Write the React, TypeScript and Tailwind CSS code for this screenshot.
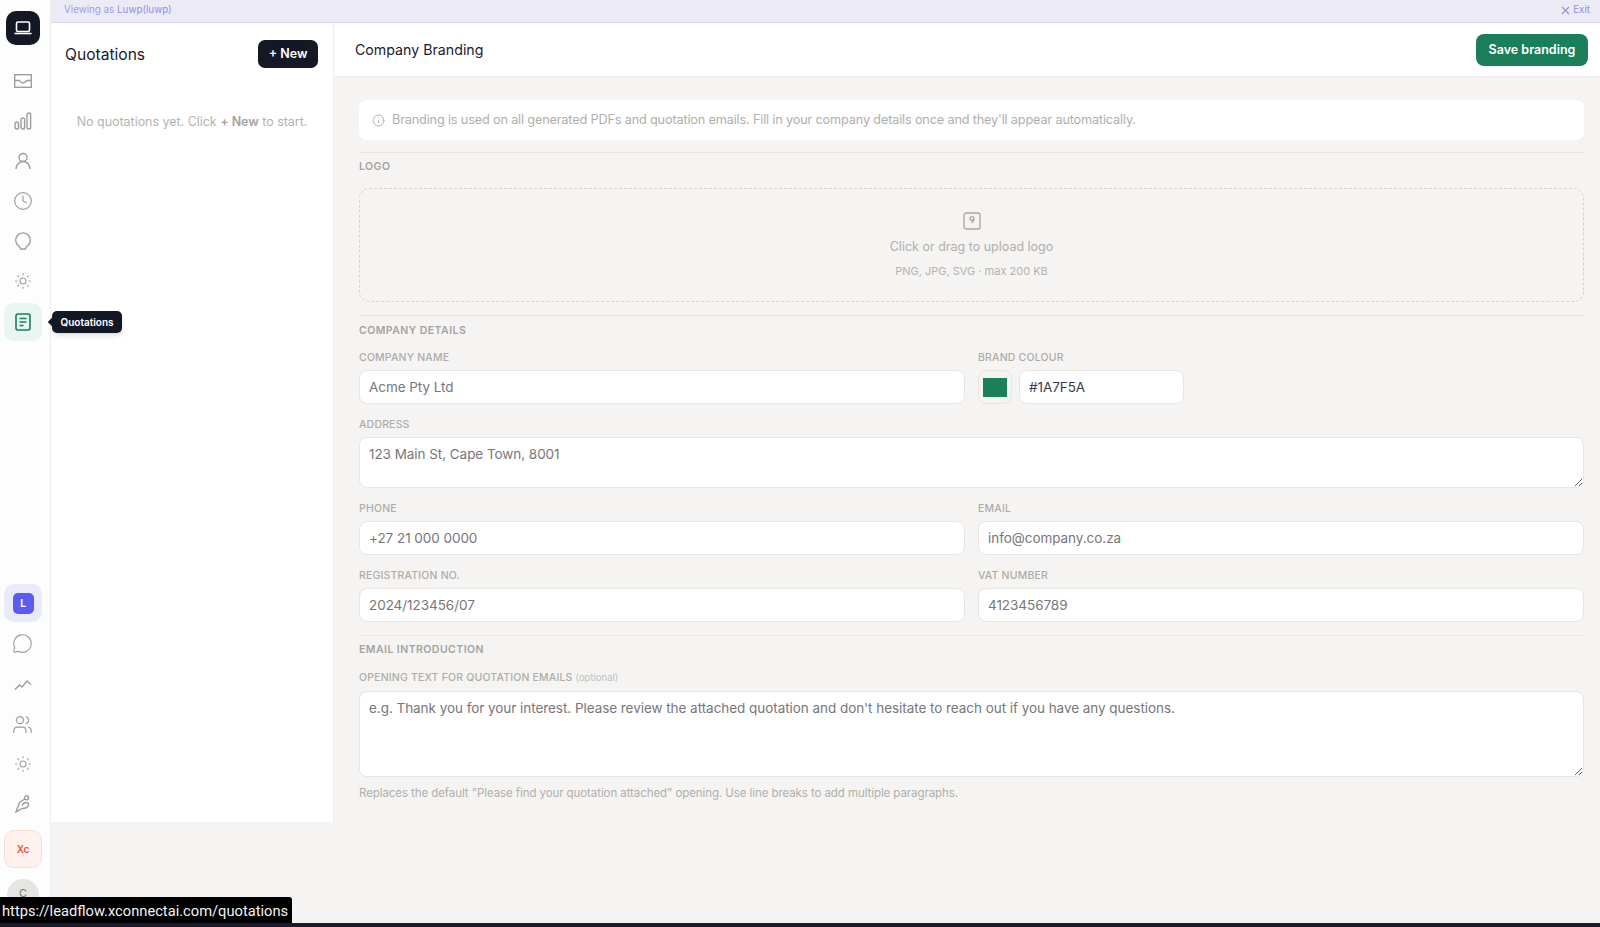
import React from "react";
import { Clock, Info, MessageCircle, Sun, Users, X } from "lucide-react";

const Font = "[font-family:Inter,'Liberation_Sans',sans-serif]";

const railIcon = "flex h-[40px] w-[45px] items-center justify-center text-[#9d9d9d]";

function Inbox() {
  return (
    <svg width="18" height="14" viewBox="0 0 18 14" fill="none" stroke="currentColor" strokeWidth="1.4">
      <rect x="0.7" y="0.7" width="16.6" height="12.6" />
      <path d="M1 6.5h4c1 0 1.5 2.5 4 2.5s3-2.5 4-2.5h4" />
    </svg>
  );
}

function Bars() {
  return (
    <svg width="18" height="18" viewBox="0 0 18 18" fill="none" stroke="currentColor" strokeWidth="1.4">
      <rect x="1" y="10" width="3.6" height="7" rx="1.8" />
      <rect x="7" y="6" width="3.6" height="11" rx="1.8" />
      <rect x="13" y="1" width="3.6" height="16" rx="1.8" />
    </svg>
  );
}

function Person() {
  return (
    <svg width="18" height="18" viewBox="0 0 18 18" fill="none" stroke="currentColor" strokeWidth="1.4">
      <circle cx="9" cy="5.5" r="4" />
      <path d="M2 17c0-4 3-7.5 7-7.5s7 3.5 7 7.5" />
    </svg>
  );
}

function Bulb() {
  return (
    <svg width="18" height="18" viewBox="0 0 18 18" fill="none" stroke="currentColor" strokeWidth="1.4">
      <path d="M5.5 14.6A7.3 7.3 0 1 1 12.5 14.6" />
      <path d="M5.5 14.6c.5.9.8 1.9 1 2.4h5c.2-.5.5-1.5 1-2.4" />
    </svg>
  );
}

function Trend() {
  return (
    <svg width="18" height="12" viewBox="0 0 18 12" fill="none" stroke="currentColor" strokeWidth="1.4">
      <path d="M1 10.5 5.5 6l2.5 2 5-6 4 3.5" />
    </svg>
  );
}

function Pen() {
  return (
    <svg width="16" height="18" viewBox="0 0 16 18" fill="none" stroke="currentColor" strokeWidth="1.4">
      <circle cx="11.5" cy="2.8" r="2" />
      <path d="M9.8 4 4.5 7.5 1 17l6-3.5c3 0 6-1 6.5-3.5.3-1.5-.8-2.5-2.5-2.5-2 0-3.5 2-4 3" />
    </svg>
  );
}

function Doc() {
  return (
    <svg width="16" height="18" viewBox="0 0 16 18" fill="none" stroke="#1a7f5a" strokeWidth="1.6">
      <rect x="1" y="1" width="14" height="16" rx="2" />
      <path d="M4.5 5.5h7M4.5 9h7M4.5 12.5h4" />
    </svg>
  );
}

function Laptop() {
  return (
    <svg width="18" height="14" viewBox="0 0 18 14" fill="none" stroke="#ffffff" strokeWidth="1.6">
      <rect x="2.5" y="1" width="13" height="9.5" rx="1.5" />
      <path d="M0.5 12.5h17" />
    </svg>
  );
}

function Upload() {
  return (
    <svg width="18" height="18" viewBox="0 0 18 18" fill="none" stroke="#a8a6a2" strokeWidth="1.3">
      <rect x="1" y="1" width="16" height="16" rx="2" />
      <circle cx="9" cy="6.6" r="1.9" />
      <path d="M10.8 7.2c0 2-.8 3-2.2 3.6" />
    </svg>
  );
}

function Label({ children }: { children: React.ReactNode }) {
  return (
    <div className="h-[13px] text-[10.5px] leading-[13px] font-medium tracking-[0.18px] text-[#aeaca8]">
      {children}
    </div>
  );
}

function Section({ children }: { children: React.ReactNode }) {
  return (
    <div className="h-[13px] text-[10.5px] leading-[13px] font-semibold tracking-[0.45px] text-[#a5a3a0]">
      {children}
    </div>
  );
}

const inputCls =
  "block h-[34px] w-full rounded-[8px] border border-[#e8e6e3] bg-white px-[9px] text-[13.5px] tracking-[-0.05px] text-[#77767a] outline-none " +
  Font;

function Field({ label, value }: { label: string; value: string }) {
  return (
    <div className="flex flex-col gap-[6px]">
      <Label>{label}</Label>
      <input className={inputCls} defaultValue={value} readOnly />
    </div>
  );
}

export default function App() {
  return (
    <div className={"relative flex h-[927px] w-full overflow-hidden bg-[#f5f4f2] " + Font}>
      {/* Icon rail */}
      <aside className="flex h-full w-[51px] shrink-0 flex-col items-stretch border-r border-[#efeeec] bg-[#fdfdfd]">
        <div className="mt-[11px] ml-[6px] flex h-[34px] w-[34px] items-center justify-center rounded-[10px] bg-[#141824]">
          <Laptop />
        </div>
        <div className="mt-[16px] flex flex-col">
          <div className={railIcon}><Inbox /></div>
          <div className={railIcon}><Bars /></div>
          <div className={railIcon}><Person /></div>
          <div className={railIcon}><Clock size={20} strokeWidth={1.4} /></div>
          <div className={railIcon}><Bulb /></div>
          <div className={railIcon}><Sun size={18} strokeWidth={1.4} /></div>
          <div className="flex h-[40px] w-[46px] items-center justify-center pt-[2px]">
            <div className="flex h-[38px] w-[38px] items-center justify-center rounded-[10px] bg-[#e9f5f0]">
              <Doc />
            </div>
          </div>
        </div>
        <div className="mt-[243px] flex flex-col">
          <div className="flex h-[38px] w-[46px] items-center justify-center">
            <div className="flex h-[38px] w-[38px] items-center justify-center rounded-[10px] bg-[#eaeafb]">
              <div className="flex h-[21px] w-[21px] items-center justify-center rounded-[5px] bg-[#5b5bf0] text-[10px] font-bold text-white">
                L
              </div>
            </div>
          </div>
          <div className={railIcon + " mt-[1px]"}><MessageCircle size={21} strokeWidth={1.3} /></div>
          <div className={railIcon + " mt-[2px]"}><Trend /></div>
          <div className={railIcon + " -mt-[1px]"}><Users size={21} strokeWidth={1.3} /></div>
          <div className={railIcon}><Sun size={18} strokeWidth={1.4} /></div>
          <div className={railIcon}><Pen /></div>
          <div className="mt-[6px] flex h-[38px] w-[46px] items-center justify-center">
            <div className="flex h-[38px] w-[38px] items-center justify-center rounded-[10px] border border-[#fbdcd6] bg-[#fff1ee] text-[10px] font-semibold text-[#f0523a]">
              Xc
            </div>
          </div>
          <div className="mt-[11px] flex w-[46px] justify-center">
            <div className="flex h-[32px] w-[32px] items-center justify-center rounded-full bg-[#e6e5e2] pb-[4px] text-[11px] leading-[12px] text-[#77767a]">
              C
            </div>
          </div>
        </div>
      </aside>

      {/* Right side */}
      <div className="flex min-w-0 flex-1 flex-col">
        <div className="flex h-[23px] shrink-0 items-center justify-between border-b border-[#d8d7f2] bg-[#ecebf5] pr-[10px] pb-[1px] pl-[13px] text-[9.8px] text-[#9d9bf0]">
          <div>
            Viewing as <span className="text-[#8f8df0]">Luwp(luwp)</span>
          </div>
          <div className="flex items-center gap-[1px] text-[#8f8df0]">
            <X size={13} strokeWidth={2} />
            Exit
          </div>
        </div>

        <div className="flex">
          {/* Quotations panel */}
          <div className="h-[799px] w-[283px] shrink-0 border-r border-[#efeeec] bg-white">
            <div className="flex items-center justify-between pt-[17px] pr-[15px] pl-[14px]">
              <div className="mt-[1px] text-[15.6px] font-normal text-[#1a1a2e]">Quotations</div>
              <div className="flex h-[28px] w-[60px] items-center justify-center rounded-[7px] bg-[#141824] pt-[1px] text-[12.5px] font-semibold text-white">
                + New
              </div>
            </div>
            <div className="mt-[45px] text-center text-[12.5px] tracking-[-0.03px] text-[#b4b3b0]">
              No quotations yet. Click <span className="font-semibold text-[#a5a3a0]">+ New</span> to start.
            </div>
          </div>

          {/* Main */}
          <div className="min-w-0 flex-1">
            <div className="flex h-[54px] items-center justify-between border-b border-[#efeeec] bg-white pr-[12px] pl-[21px]">
              <div className="text-[14.2px] text-[#1a1a2e]">Company Branding</div>
              <div className="mt-[1px] flex h-[32px] w-[112px] items-center justify-center rounded-[8px] bg-[#1a7f5a] text-[12.5px] font-semibold text-white">
                Save branding
              </div>
            </div>

            <div className="px-[25px] pt-[23px] pr-[16px]">
              <div className="flex h-[40px] items-center gap-[7px] rounded-[8px] bg-white px-[13px] text-[12.75px] tracking-[-0.19px] text-[#b0afac]">
                <Info size={13} strokeWidth={1.5} className="text-[#a5a3a0]" />
                Branding is used on all generated PDFs and quotation emails. Fill in your company details once and they'll appear automatically.
              </div>

              <div className="mt-[12px] border-t border-[#e8e6e3] pt-[7px]">
                <Section>LOGO</Section>
              </div>
              <div className="mt-[15px] flex h-[114px] flex-col items-center rounded-[10px] border border-dashed border-[#d6d4d0] pt-[23px]">
                <Upload />
                <div className="mt-[8px] text-[12.5px] text-[#b0afac]">Click or drag to upload logo</div>
                <div className="mt-[6px] text-[11px] text-[#b4b3b0]">PNG, JPG, SVG · max 200 KB</div>
              </div>

              <div className="mt-[13px] border-t border-[#e8e6e3] pt-[8px]">
                <Section>COMPANY DETAILS</Section>
              </div>

              <div className="mt-[14px] grid grid-cols-2 gap-x-[13px]">
                <Field label="COMPANY NAME" value="Acme Pty Ltd" />
                <div className="flex flex-col gap-[6px]">
                  <Label>BRAND COLOUR</Label>
                  <div className="flex gap-[7px]">
                    <div className="flex h-[34px] w-[34px] items-center justify-center rounded-[8px] border border-[#e8e6e3] bg-[#f5f4f2]">
                      <div className="h-[19px] w-[24px] bg-[#1a7f5a]" />
                    </div>
                    <input className={inputCls + " !w-[165px] !text-[#3a3a48]"} defaultValue="#1A7F5A" readOnly />
                  </div>
                </div>
              </div>

              <div className="mt-[14px] flex flex-col gap-[6px]">
                <Label>ADDRESS</Label>
                <textarea
                  className="block h-[51px] w-full rounded-[8px] border border-[#e8e6e3] bg-white px-[9px] py-[6px] text-[13.5px] leading-[20px] tracking-[-0.05px] text-[#77767a] outline-none"
                  defaultValue="123 Main St, Cape Town, 8001"
                  readOnly
                />
              </div>

              <div className="mt-[14px] grid grid-cols-2 gap-x-[13px] gap-y-[14px]">
                <Field label="PHONE" value="+27 21 000 0000" />
                <Field label="EMAIL" value="info@company.co.za" />
                <Field label="REGISTRATION NO." value="2024/123456/07" />
                <Field label="VAT NUMBER" value="4123456789" />
              </div>

              <div className="mt-[13px] border-t border-[#ecebe8] pt-[7px]">
                <Section>EMAIL INTRODUCTION</Section>
              </div>

              <div className="mt-[15px] h-[13px] text-[10.5px] leading-[13px] font-medium tracking-[0.18px] text-[#aeaca8]">
                OPENING TEXT FOR QUOTATION EMAILS{" "}
                <span className="text-[9.5px] font-normal tracking-normal text-[#c2c1be]">(optional)</span>
              </div>
              <textarea
                className="mt-[7px] block h-[86px] w-full rounded-[8px] border border-[#e8e6e3] bg-white px-[9px] py-[6px] text-[13.5px] leading-[20px] tracking-[-0.05px] text-[#77767a] outline-none"
                defaultValue="e.g. Thank you for your interest. Please review the attached quotation and don't hesitate to reach out if you have any questions."
                readOnly
              />
              <div className="mt-[8px] text-[11.5px] tracking-[-0.08px] text-[#b0afac]">
                Replaces the default "Please find your quotation attached" opening. Use line breaks to add multiple paragraphs.
              </div>
            </div>
          </div>
        </div>
      </div>

      {/* Tooltip */}
      <div className="absolute top-[311px] left-[52px] flex h-[22px] w-[70px] items-center justify-center rounded-[5px] bg-[#141824] text-[10px] font-semibold text-white shadow-md">
        <div className="absolute top-[8px] -left-[3px] h-[6px] w-[6px] rotate-45 bg-[#141824]" />
        Quotations
      </div>

      {/* Browser status bar */}
      <div className="absolute bottom-[4px] left-0 flex h-[26px] w-[292px] items-center rounded-tr-[3px] bg-black pt-[2px] pl-[2px] whitespace-nowrap [font-family:Roboto,sans-serif] text-[14.7px] text-[#f2f2f2]">
        https://leadflow.xconnectai.com/quotations
      </div>
      <div className="absolute right-0 bottom-0 left-0 h-[4px] bg-[#1b1b2b]" />
    </div>
  );
}
